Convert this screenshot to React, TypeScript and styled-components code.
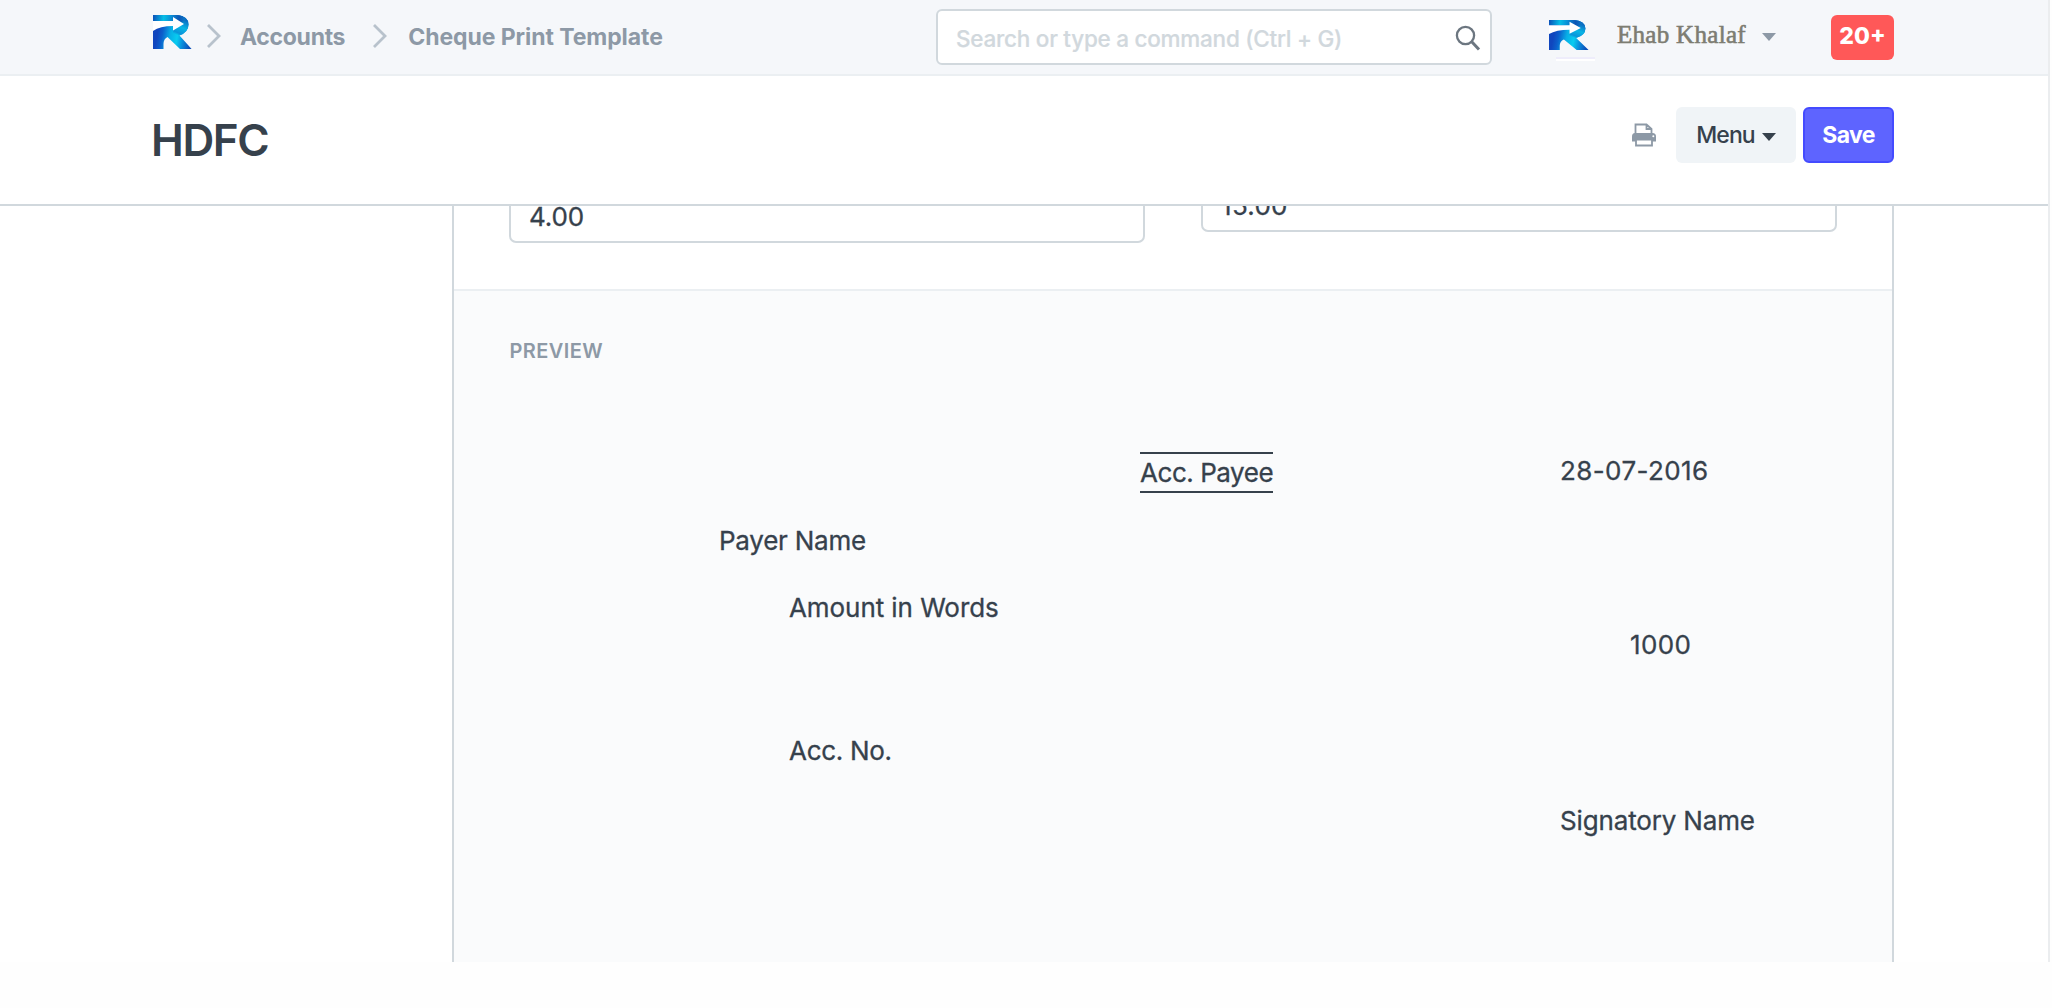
import React from 'react';
import styled, { createGlobalStyle } from 'styled-components';

const Global = createGlobalStyle`
  * { box-sizing: border-box; }
  body { margin: 0; background: #fefefe; font-family: Inter, "Liberation Sans", sans-serif; color: #36414c; overflow: hidden; }
`;

const Page = styled.div`
  width: 2050px;
  height: 962px;
  display: flex;
  flex-direction: column;
  background: #fff;
  border-right: 2px solid #ebedef;
  overflow: hidden;
`;

const Navbar = styled.header`
  height: 76px;
  flex: none;
  display: flex;
  align-items: flex-start;
  background: #f5f7fa;
  border-bottom: 2px solid #ebeff2;
  padding-left: 153px;
`;

const Crumbs = styled.nav`
  width: 783px;
  display: flex;
`;

const BrandLogo = styled.svg<{ $w: number; $h: number; $top: number }>`
  width: ${p => p.$w}px;
  height: ${p => p.$h}px;
  margin-top: ${p => p.$top}px;
  flex: none;
  display: block;
`;

const Chevron = styled.svg<{ $left: number }>`
  width: 16px;
  height: 26px;
  margin: 23px 0 0 ${p => p.$left}px;
  flex: none;
`;

const Crumb = styled.span<{ $left: number; $spacing: number }>`
  margin: 23px 0 0 ${p => p.$left}px;
  font-size: 23px;
  line-height: 28px;
  font-weight: 700;
  letter-spacing: ${p => p.$spacing}px;
  white-space: nowrap;
  color: #8d99a6;
`;

const SearchBox = styled.div`
  width: 556px;
  height: 56px;
  margin-top: 9px;
  padding: 0 9px 0 18px;
  border: 2px solid #d1d8dd;
  border-radius: 6px;
  background: #fff;
  display: flex;
  align-items: center;
  justify-content: space-between;
`;

const Placeholder = styled.span`
  padding-top: 2px;
  font-size: 22.5px;
  font-weight: 500;
  letter-spacing: -0.25px;
  color: #d1d8dd;
  -webkit-text-stroke: 0.2px #d1d8dd;
  white-space: nowrap;
`;

const Avatar = styled.div`
  width: 47px;
  margin-left: 57px;
  display: flex;
  flex-direction: column;
`;

const AvatarEdge = styled.span`
  width: 39px;
  height: 4px;
  margin: 7px 0 0 7px;
  border-top: 2px solid #eeedfb;
  background: #fff;
`;

const UserName = styled.span`
  margin: 17px 0 0 21px;
  width: 132px;
  font-family: "Liberation Serif", serif;
  font-size: 25px;
  line-height: 36px;
  letter-spacing: 0.3px;
  color: #7d7d72;
  -webkit-text-stroke: 0.6px #7d7d72;
  white-space: nowrap;
`;

const Caret = styled.span<{ $color: string }>`
  width: 0;
  height: 0;
  border: 7px solid transparent;
  border-top: 8px solid ${p => p.$color};
  border-bottom: 0;
`;

const UserCaret = styled(Caret)`
  margin: 33px 0 0 13px;
`;

const MenuCaret = styled(Caret)`
  margin-top: 5px;
`;

const Badge = styled.span`
  width: 63px;
  height: 45px;
  margin: 15px 0 0 55px;
  border-radius: 6px;
  background: #ff5858;
  color: #fff;
  font-size: 23px;
  font-weight: 800;
  line-height: 43px;
  text-align: center;
`;

const TitleBar = styled.div`
  height: 130px;
  flex: none;
  display: flex;
  align-items: flex-start;
  padding-left: 151px;
  background: #fff;
  border-bottom: 2px solid #d1d8dd;
`;

const Title = styled.h1`
  width: 1480px;
  margin: 37px 0 0;
  font-size: 44px;
  line-height: 54px;
  font-weight: 600;
  letter-spacing: -1.4px;
`;

const PrintIcon = styled.svg`
  width: 26px;
  height: 24px;
  margin-top: 47px;
  flex: none;
`;

const Button = styled.button<{ $primary?: boolean }>`
  width: ${p => (p.$primary ? 91 : 120)}px;
  height: 56px;
  margin: 31px 0 0 ${p => (p.$primary ? 7 : 19)}px;
  padding: 0 0 1px;
  display: flex;
  align-items: center;
  justify-content: center;
  gap: 7px;
  border: ${p => (p.$primary ? '2px solid #444bff' : '0')};
  border-radius: 6px;
  background: ${p => (p.$primary ? '#5e64ff' : '#f0f4f7')};
  color: ${p => (p.$primary ? '#fff' : '#36414c')};
  font-family: inherit;
  font-size: 23px;
  font-weight: ${p => (p.$primary ? 700 : 500)};
  letter-spacing: ${p => (p.$primary ? -0.7 : -0.9)}px;
`;

const Form = styled.main`
  width: 1442px;
  margin-left: 452px;
  flex: 1;
  display: flex;
  flex-direction: column;
  border: solid #d1d8dd;
  border-width: 0 2px;
`;

const Fields = styled.section`
  height: 85px;
  flex: none;
  display: flex;
  gap: 56px;
  padding-left: 55px;
  border-bottom: 2px solid #ebeff2;
  overflow: hidden;
`;

const Field = styled.div<{ $shift: number; $ls: number }>`
  width: 636px;
  height: 56px;
  margin-top: ${p => p.$shift}px;
  padding: 0 18px;
  border: 2px solid #d1d8dd;
  border-radius: 7px;
  background: #fff;
  font-size: 26px;
  line-height: 55px;
  letter-spacing: ${p => p.$ls}px;
  -webkit-text-stroke: 0.3px #36414c;
`;

const Preview = styled.section`
  flex: 1;
  padding: 47px 0 0 55px;
  background: #fafbfc;
`;

const SectionHead = styled.h2`
  margin: 0 0 1px;
  padding-left: 0.5px;
  font-size: 20px;
  line-height: 26px;
  font-weight: 600;
  letter-spacing: 0.4px;
  color: #8d99a6;
`;

/* Cheque surface: each field is placed at its own printed position. */
const Cheque = styled.div`
  position: relative;
  height: 560px;
`;

const Mark = styled.span<{ $x: number; $y: number; $ls: number; $crossed?: boolean }>`
  position: absolute;
  left: ${p => p.$x}px;
  top: ${p => p.$y}px;
  font-size: 26px;
  line-height: 37px;
  letter-spacing: ${p => p.$ls}px;
  -webkit-text-stroke: 0.3px #36414c;
  white-space: nowrap;
  ${p => p.$crossed && 'border: solid #36414c; border-width: 2px 0;'}
`;

function Logo({ w, h, top }: { w: number; h: number; top: number }) {
  const id = `brand-${w}`;
  return (
    <BrandLogo $w={w} $h={h} $top={top} viewBox="0 0 39 34" preserveAspectRatio="none">
      <defs>
        <linearGradient id={`${id}-top`} gradientUnits="userSpaceOnUse" x1="0" y1="0" x2="36" y2="4">
          <stop offset="0" stopColor="#0b4fb8" />
          <stop offset=".3" stopColor="#06bfe6" />
          <stop offset=".5" stopColor="#0a8fd6" />
          <stop offset=".72" stopColor="#0c55b4" />
          <stop offset="1" stopColor="#0a8ed4" />
        </linearGradient>
        <linearGradient id={`${id}-leg`} gradientUnits="userSpaceOnUse" x1="3" y1="26" x2="36" y2="32">
          <stop offset="0" stopColor="#1046be" />
          <stop offset=".15" stopColor="#0b60cc" />
          <stop offset=".38" stopColor="#08aee6" />
          <stop offset=".6" stopColor="#08ccf0" />
          <stop offset=".78" stopColor="#0a8edc" />
          <stop offset="1" stopColor="#0b50ba" />
        </linearGradient>
        <linearGradient id={`${id}-bowl`} gradientUnits="userSpaceOnUse" x1="30" y1="2" x2="22" y2="21">
          <stop offset="0" stopColor="#0c5cba" />
          <stop offset=".5" stopColor="#08b6e6" />
          <stop offset=".8" stopColor="#0a94da" />
          <stop offset="1" stopColor="#08c0ea" stopOpacity="0" />
        </linearGradient>
      </defs>
      <path d="M0 0H24Q35.500 1 35.500 9.500Q35.500 17 26.500 20.500L38.600 34H27L14.500 22Q10.500 24 10.500 29V34H0Z" fill={`url(#${id}-leg)`} />
      <path d="M24 0Q35.500 1 35.500 9.500Q35.500 17 26.500 20.500L20 18V0Z" fill={`url(#${id}-bowl)`} />
      <path d="M0 0H24Q30 .5 33 4L28 8L20 6H0Z" fill={`url(#${id}-top)`} />
      <path d="M0 6H20V2L31 9L20 15.500V11Q7 11 0 16Z" fill="#fff" />
    </BrandLogo>
  );
}

function Separator({ left }: { left: number }) {
  return (
    <Chevron $left={left} viewBox="0 0 16 26" fill="none">
      <path d="M2 2L13 13L2 24" stroke="#b8c2cc" strokeWidth="2.8" />
    </Chevron>
  );
}

export default function App() {
  return (
    <>
      <Global />
      <Page>
        <Navbar>
          <Crumbs>
            <Logo w={39} h={34} top={15} />
            <Separator left={14} />
            <Crumb $left={18} $spacing={-0.3}>Accounts</Crumb>
            <Separator left={27} />
            <Crumb $left={20} $spacing={-0.07}>Cheque Print Template</Crumb>
          </Crumbs>
          <SearchBox>
            <Placeholder>Search or type a command (Ctrl + G)</Placeholder>
            <svg width="26" height="27" viewBox="0 0 26 27" fill="none" stroke="#6c7680">
              <circle cx="10.5" cy="11.5" r="8.6" strokeWidth="2.3" />
              <path d="M16.500 17.500L24 25.500" strokeWidth="3" />
            </svg>
          </SearchBox>
          <Avatar>
            <Logo w={40} h={30} top={20} />
            <AvatarEdge />
          </Avatar>
          <UserName>Ehab Khalaf</UserName>
          <UserCaret $color="#8d99a6" />
          <Badge>20+</Badge>
        </Navbar>
        <TitleBar>
          <Title>HDFC</Title>
          <PrintIcon viewBox="0 0 26 24" fill="none" stroke="#8d99a6" strokeWidth="1.8">
            <path d="M4.500 11V1.500H15.500L20.500 6V11M15.500 1.500V6H20.500" />
            <path d="M4 10H21.500Q25 10 25 13.500V18.500H1V13.500Q1 10 4 10Z" fill="#8d99a6" stroke="none" />
            <path d="M5 16.500H21V22.500H5Z" fill="#fff" />
            <circle cx="22.300" cy="13.200" r="1" fill="#fff" stroke="none" />
          </PrintIcon>
          <Button>Menu <MenuCaret $color="#36414c" /></Button>
          <Button $primary>Save</Button>
        </TitleBar>
        <Form>
          <Fields>
            <Field $shift={-19} $ls={-0.1}>4.00</Field>
            <Field $shift={-30} $ls={0.3}>15.00</Field>
          </Fields>
          <Preview>
            <SectionHead>PREVIEW</SectionHead>
            <Cheque>
              <Mark $x={631} $y={87} $ls={-0.45} $crossed>Acc. Payee</Mark>
              <Mark $x={1051} $y={87} $ls={0.4}>28-07-2016</Mark>
              <Mark $x={210} $y={157} $ls={-0.25}>Payer Name</Mark>
              <Mark $x={280} $y={224} $ls={-0.07}>Amount in Words</Mark>
              <Mark $x={1121} $y={261} $ls={0.4}>1000</Mark>
              <Mark $x={280} $y={367} $ls={-0.3}>Acc. No.</Mark>
              <Mark $x={1051} $y={437} $ls={-0.15}>Signatory Name</Mark>
            </Cheque>
          </Preview>
        </Form>
      </Page>
    </>
  );
}
